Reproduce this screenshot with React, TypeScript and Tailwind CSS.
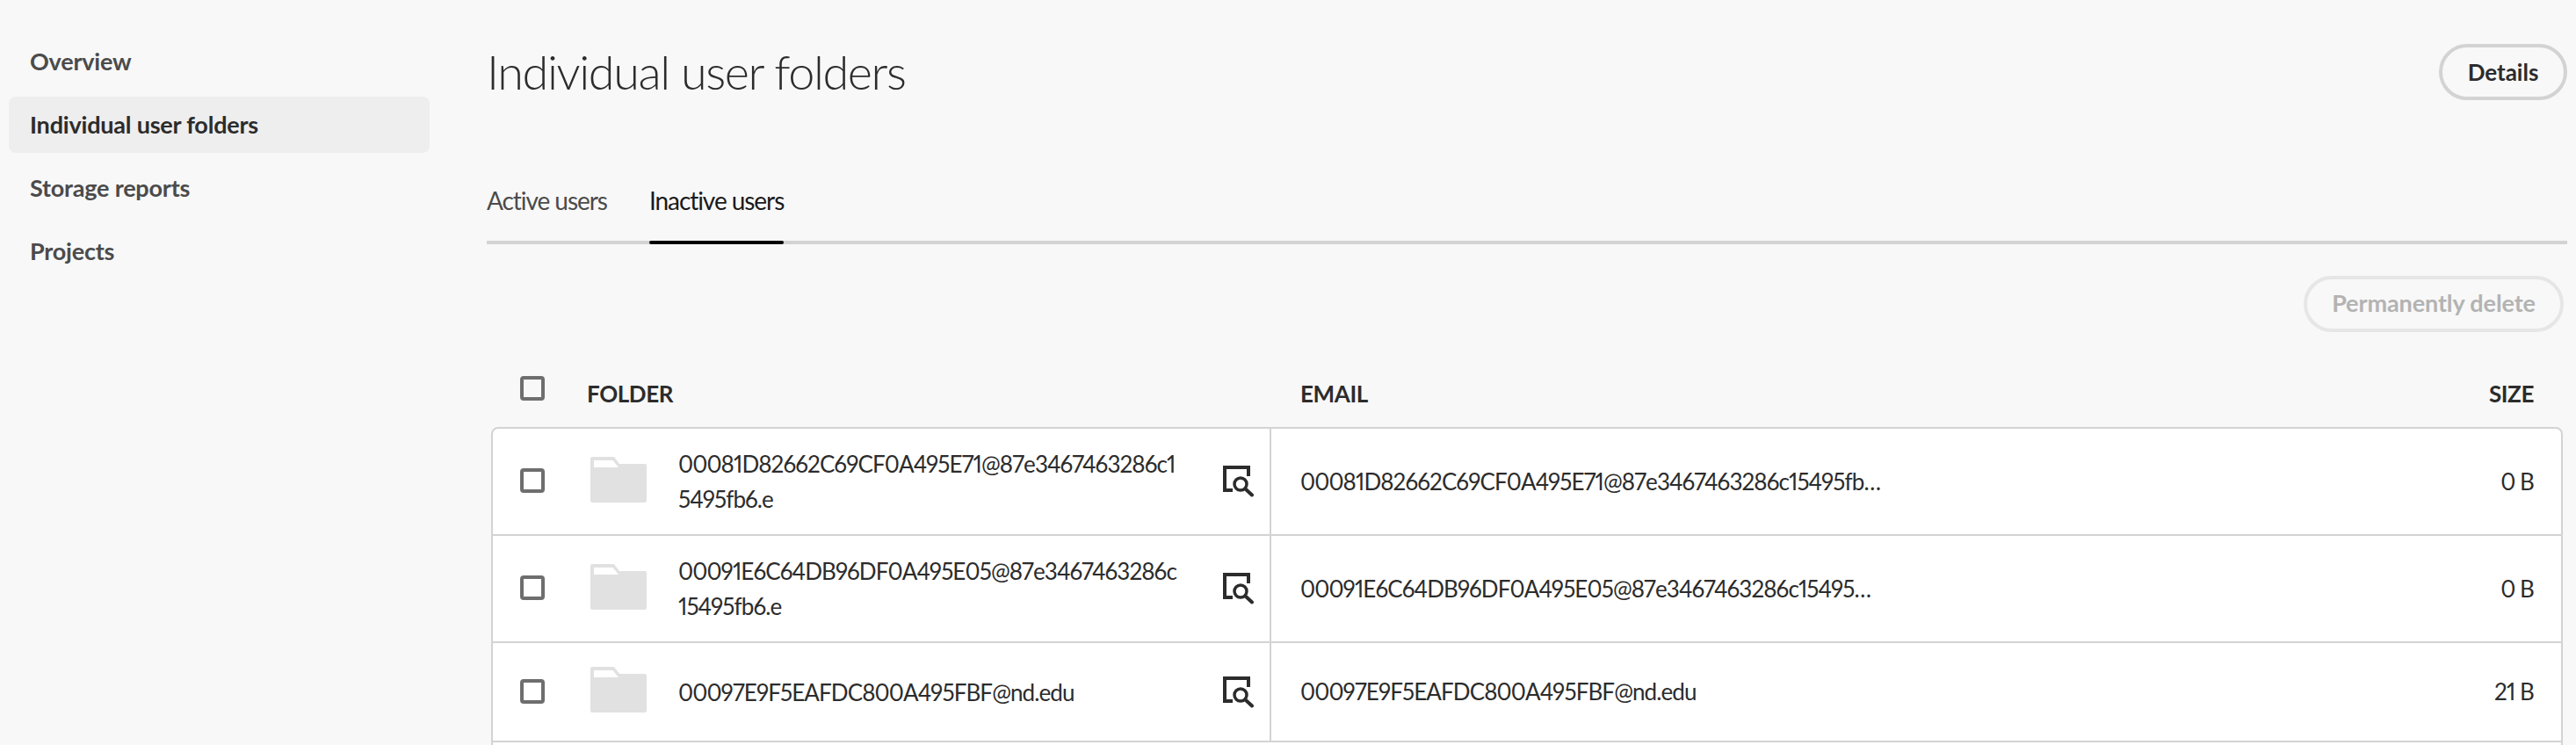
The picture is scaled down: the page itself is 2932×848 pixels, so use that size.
const navItems = ['Overview', 'Individual user folders', 'Storage reports', 'Projects'];

const rows = [
  {
    folder: '00081D82662C69CF0A495E71@87e3467463286c1\n5495fb6.e',
    email: '00081D82662C69CF0A495E71@87e3467463286c15495fb…',
    size: '0 B',
    height: 'h-[122px]',
  },
  {
    folder: '00091E6C64DB96DF0A495E05@87e3467463286c\n15495fb6.e',
    email: '00091E6C64DB96DF0A495E05@87e3467463286c15495…',
    size: '0 B',
    height: 'h-[122px]',
  },
  {
    folder: '00097E9F5EAFDC800A495FBF@nd.edu',
    email: '00097E9F5EAFDC800A495FBF@nd.edu',
    size: '21 B',
    height: 'h-[113px]',
  },
];

function Checkbox() {
  return <div className="h-7 w-7 shrink-0 rounded-[4px] border-4 border-[#6e6e6e]" />;
}

function FolderIcon() {
  return (
    <svg width="64" height="52" viewBox="0 0 64 52" className="shrink-0">
      <path d="M2 0h24a2 2 0 0 1 1.5.7L33 8h29a2 2 0 0 1 2 2v40a2 2 0 0 1-2 2H2a2 2 0 0 1-2-2V2a2 2 0 0 1 2-2z" fill="#e1e1e1" />
      <path d="M4 4h21.5L32 12H4z" fill="#ffffff" />
    </svg>
  );
}

function InspectIcon() {
  return (
    <svg width="36" height="36" viewBox="0 0 36 36" className="shrink-0">
      <path d="M11 28H2V2h27v10" fill="none" stroke="#2c2c2c" strokeWidth="4" />
      <circle cx="20" cy="21" r="7" fill="none" stroke="#2c2c2c" strokeWidth="3.5" />
      <path d="M25.5 26.5L33 33.5" fill="none" stroke="#2c2c2c" strokeWidth="4" strokeLinecap="round" />
    </svg>
  );
}

export default function App() {
  return (
    <div className="flex h-[848px] overflow-hidden bg-[#f8f8f8] pr-[10px] font-['Lato','Liberation_Sans',sans-serif] text-[#2c2c2c]">
      {/* Sidebar */}
      <nav className="flex w-[554px] shrink-0 flex-col gap-2 pl-[10px] pr-[65px] pt-[38px]">
        {navItems.map((item) => (
          <div
            key={item}
            className={`flex h-16 items-center rounded-lg px-6 text-[27px] font-bold tracking-[-0.2px] ${
              item === 'Individual user folders' ? 'bg-[#eeeeee] text-[#2c2c2c]' : 'text-[#4b4b4b]'
            }`}
          >
            {item}
          </div>
        ))}
      </nav>

      <main className="min-w-0 flex-1">
        {/* Heading */}
        <div className="flex h-[114px] items-start justify-between pt-[50px]">
          <h1 className="-mt-[3px] text-[54px] leading-[70px] font-light tracking-[-1.4px]">Individual user folders</h1>
          <button className="flex h-16 w-[146px] items-center justify-center rounded-full border-4 border-[#d3d3d3] text-[26px] font-bold">
            Details
          </button>
        </div>

        {/* Tabs */}
        <div className="mt-[80px] flex h-[84px] gap-12 border-b-4 border-[#d3d3d3]">
          <div className="pt-[14px] text-[28px] leading-10 tracking-[-1.05px] text-[#4b4b4b]">Active users</div>
          <div className="relative pt-[14px] text-[28px] leading-10 tracking-[-1.05px] text-[#1a1a1a]">
            Inactive users
            <div className="absolute right-0 -bottom-1 left-0 h-1 rounded-sm bg-black" />
          </div>
        </div>

        {/* Toolbar */}
        <div className="mt-9 flex justify-end pr-1">
          <button
            disabled
            className="flex h-16 w-[296px] items-center justify-center rounded-full border-4 border-[#e6e6e6] pb-[2px] text-[27px] font-bold tracking-[-0.1px] text-[#b3b3b3]"
          >
            Permanently delete
          </button>
        </div>

        {/* Table header */}
        <div className="flex h-[108px] pr-[38px] pl-[38px] text-[26px] font-bold tracking-[-0.4px]">
          <div className="mt-[50px]">
            <Checkbox />
          </div>
          <div className="mt-[52px] ml-[48px] w-[812px] leading-9">FOLDER</div>
          <div className="mt-[52px] leading-9">EMAIL</div>
          <div className="mt-[52px] ml-auto leading-9">SIZE</div>
        </div>

        {/* Table body */}
        <div className="mx-[5px] rounded-t-lg border-2 border-[#d3d3d3] bg-white text-[26px] tracking-[-0.9px] proportional-nums">
          {rows.map((row) => (
            <div key={row.folder} className={`flex border-b-2 border-[#d3d3d3] ${row.height}`}>
              <div className="flex w-[886px] shrink-0 items-center border-r-2 border-[#d3d3d3] pl-[31px]">
                <div className="-mt-[2px]">
                  <Checkbox />
                </div>
                <div className="-mt-[5px] ml-[52px]">
                  <FolderIcon />
                </div>
                <div className="ml-9 w-[570px] leading-10 whitespace-pre-line">{row.folder}</div>
                <div className="ml-[50px]">
                  <InspectIcon />
                </div>
              </div>
              <div className="flex min-w-0 flex-1 items-center justify-between pr-[31px] pl-[33px]">
                <span>{row.email}</span>
                <span>{row.size}</span>
              </div>
            </div>
          ))}
          <div className="h-[60px]" />
        </div>
      </main>
    </div>
  );
}
